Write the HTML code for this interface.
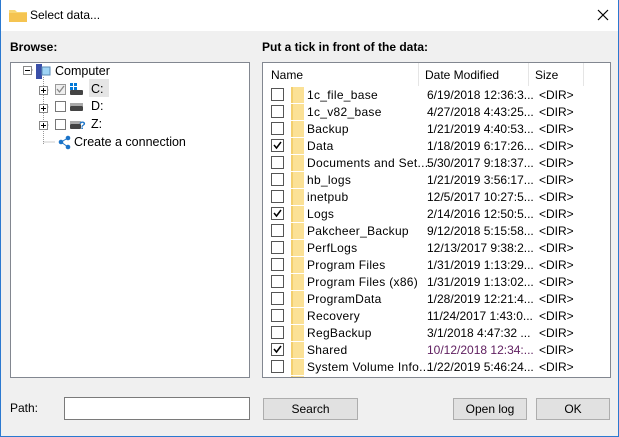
<!DOCTYPE html>
<html><head><meta charset="utf-8"><style>
*{margin:0;padding:0;box-sizing:border-box}
body{width:619px;height:437px;background:#f0f0f0;font-family:"Liberation Sans",sans-serif;font-size:12px;color:#000;position:relative;overflow:hidden}
.a{position:absolute;white-space:nowrap}
.win{position:absolute;left:0;top:0;width:619px;height:437px;border:1px solid #2b79d0;border-top:none}
.title{position:absolute;left:0;top:0;width:619px;height:31px;background:#fff}
.panel{position:absolute;background:#fff;border:1px solid #828790}
.cb{position:absolute;width:13px;height:13px;border:1px solid #555;background:#fff}
.fold{position:absolute;width:13px;height:16px;background:#fbe196;border-left:2px solid #f3cf6e}
.btn{position:absolute;background:#e1e1e1;border:1px solid #adadad;text-align:center;line-height:20px}
.row{position:absolute;left:0;width:346px;height:17px}
.nm{letter-spacing:0.3px}
</style></head><body>
<div class="title"></div>
<div class="win"></div>
<svg class="a" style="left:9px;top:8px" width="18" height="14"><path d="M0 2h6l2 2h10v10H0z" fill="#f8d775"/><path d="M0 5h18v9H0z" fill="#f5c451"/></svg>
<div class="a" style="left:30px;top:8px;font-size:12px">Select data...</div>
<svg class="a" style="left:597px;top:9px" width="12" height="12"><path d="M1 1L11 11M11 1L1 11" stroke="#000" stroke-width="1.2"/></svg>
<div class="a" style="left:10px;top:40px;font-weight:bold">Browse:</div>
<div class="a" style="left:262px;top:40px;font-weight:bold">Put a tick in front of the data:</div>

<div class="panel" style="left:10px;top:62px;width:240px;height:316px">
<svg class="a" style="left:0;top:0" width="240" height="100">
<g stroke="#999" stroke-dasharray="1 1" fill="none"><path d="M32.5 14v68M32.5 27h6M32.5 44h6M32.5 62h6M32.5 79h12M17 7h6"/></g>
<rect x="12.5" y="3.5" width="8" height="8" fill="#fff" stroke="#888"/><path d="M14 7.5h5" stroke="#000"/>
<g fill="#fff" stroke="#888"><rect x="28.5" y="23.5" width="8" height="8"/><rect x="28.5" y="41.5" width="8" height="8"/><rect x="28.5" y="58.5" width="8" height="8"/></g>
<g stroke="#000"><path d="M30 27.5h5M32.5 25v5M30 45.5h5M32.5 43v5M30 62.5h5M32.5 60v5"/></g>
<rect x="25" y="1" width="6" height="15" fill="#3a4fa8"/><rect x="31" y="4" width="8" height="8" fill="#9fd4f5" stroke="#5a8ab5"/>
<rect x="44.5" y="21.5" width="10" height="10" fill="#eee" stroke="#999"/><path d="M46 26l2.5 3 4.5-6" stroke="#888" fill="none" stroke-width="1.3"/>
<rect x="44.5" y="38.5" width="10" height="10" fill="#fff" stroke="#777"/><rect x="44.5" y="56.5" width="10" height="10" fill="#fff" stroke="#777"/>
<g fill="#0078d7"><rect x="59" y="20" width="3" height="3"/><rect x="63" y="20" width="3" height="3"/><rect x="59" y="24" width="3" height="3"/><rect x="63" y="24" width="3" height="3"/></g>
<g fill="#444"><rect x="59" y="27" width="13" height="5" rx="1"/><rect x="59" y="43" width="13" height="5" rx="1"/><rect x="59" y="61" width="11" height="5" rx="1"/></g>
<g fill="#aaa"><rect x="59" y="40" width="13" height="3"/><rect x="59" y="58" width="11" height="3"/></g>
<text x="68" y="66" font-size="11" font-weight="bold" fill="#1a73c8" font-family="Liberation Sans">?</text>
<g fill="#1a73c8"><circle cx="50" cy="79" r="2.3"/><circle cx="57" cy="75" r="2.3"/><circle cx="57" cy="84" r="2.3"/></g><path d="M50 79L57 75M50 79L57 84" stroke="#1a73c8"/>
<rect x="78" y="16" width="20" height="18" fill="#e5e5e5"/>
</svg>
<div class="a" style="left:44px;top:1px;font-size:12.5px">Computer</div>
<div class="a" style="left:80px;top:19px;font-size:12.5px">C:</div>
<div class="a" style="left:80px;top:36px;font-size:12.5px">D:</div>
<div class="a" style="left:80px;top:54px;font-size:12.5px">Z:</div>
<div class="a" style="left:63px;top:72px;font-size:12.5px">Create a connection</div>
</div>

<div class="panel" style="left:262px;top:62px;width:349px;height:316px;overflow:hidden">
<div class="a" style="left:0;top:0;width:347px;height:23px;background:#fff"></div>
<div class="a" style="left:155px;top:0;width:1px;height:23px;background:#e5e5e5"></div>
<div class="a" style="left:265px;top:0;width:1px;height:23px;background:#e5e5e5"></div>
<div class="a" style="left:320px;top:0;width:1px;height:23px;background:#e5e5e5"></div>
<div class="a" style="left:8px;top:5px">Name</div>
<div class="a" style="left:162px;top:5px">Date Modified</div>
<div class="a" style="left:272px;top:5px">Size</div>
<div id="rows"></div>
</div>
<script>
var d=[["1c_file_base","6/19/2018 12:36:3...",0],["1c_v82_base","4/27/2018 4:43:25...",0],["Backup","1/21/2019 4:40:53...",0],["Data","1/18/2019 6:17:26...",1],["Documents and Set...","5/30/2017 9:18:37...",0],["hb_logs","1/21/2019 3:56:17...",0],["inetpub","12/5/2017 10:27:5...",0],["Logs","2/14/2016 12:50:5...",1],["Pakcheer_Backup","9/12/2018 5:15:58...",0],["PerfLogs","12/13/2017 9:38:2...",0],["Program Files","1/31/2019 1:13:29...",0],["Program Files (x86)","1/31/2019 1:13:02...",0],["ProgramData","1/28/2019 12:21:4...",0],["Recovery","11/24/2017 1:43:0...",0],["RegBackup","3/1/2018 4:47:32 ...",0],["Shared","10/12/2018 12:34:...",1],["System Volume Info...","1/22/2019 5:46:24...",0],["Users","",0]];
var h="";d.forEach(function(r,i){var y=23+i*17;
h+='<div class="row" style="top:'+y+'px">'+
'<div class="cb" style="left:8px;top:2px">'+(r[2]?'<svg width="11" height="11" style="position:absolute;left:0;top:0"><path d="M2 5l2.5 3 4.5-6" stroke="#000" stroke-width="1.5" fill="none"/></svg>':'')+'</div>'+
'<div class="fold" style="left:28px;top:1px"></div>'+
'<div class="a nm" style="left:44px;top:2px">'+r[0]+'</div>'+
'<div class="a" style="left:164px;top:2px;'+(i==15?'color:#602060':'')+'">'+r[1]+'</div>'+
(r[1]?'<div class="a" style="left:276px;top:2px">&lt;DIR&gt;</div>':'')+'</div>';});
document.getElementById("rows").innerHTML=h;
</script>

<div class="a" style="left:10px;top:401px">Path:</div>
<div class="a" style="left:64px;top:397px;width:186px;height:23px;background:#fff;border:1px solid #7a7a7a"></div>
<div class="btn" style="left:263px;top:398px;width:95px;height:22px">Search</div>
<div class="btn" style="left:453px;top:398px;width:74px;height:22px">Open log</div>
<div class="btn" style="left:536px;top:398px;width:74px;height:22px">OK</div>
</body></html>
